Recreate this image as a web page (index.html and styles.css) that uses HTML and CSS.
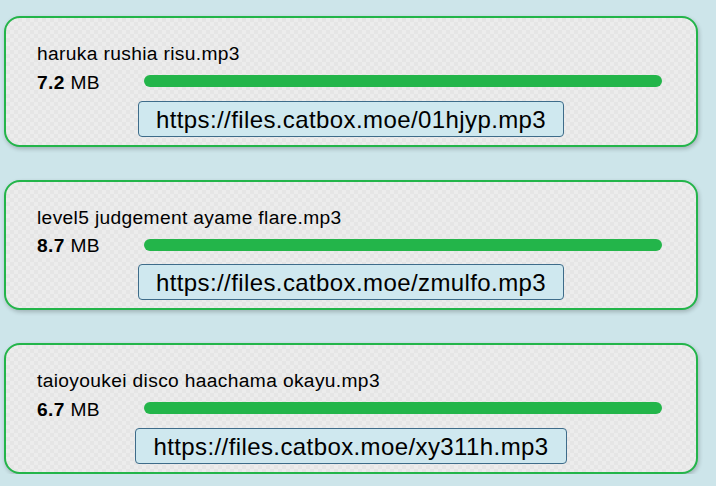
FILE: index.html
```html
<!DOCTYPE html>
<html lang="en">
<head>
<meta charset="utf-8">
<title>Uploads</title>
<link rel="stylesheet" href="styles.css">
</head>
<body>
<main class="list">
  <section class="card">
    <div class="name">haruka rushia risu.mp3</div>
    <div class="row">
      <span class="size"><b>7.2</b> MB</span>
      <span class="bar"></span>
    </div>
    <div class="linkwrap"><span class="link">https://files.catbox.moe/01hjyp.mp3</span></div>
  </section>
  <section class="card">
    <div class="name">level5 judgement ayame flare.mp3</div>
    <div class="row">
      <span class="size"><b>8.7</b> MB</span>
      <span class="bar"></span>
    </div>
    <div class="linkwrap"><span class="link">https://files.catbox.moe/zmulfo.mp3</span></div>
  </section>
  <section class="card">
    <div class="name">taioyoukei disco haachama okayu.mp3</div>
    <div class="row">
      <span class="size"><b>6.7</b> MB</span>
      <span class="bar"></span>
    </div>
    <div class="linkwrap"><span class="link">https://files.catbox.moe/xy311h.mp3</span></div>
  </section>
</main>
</body>
</html>
```

FILE: styles.css
```css
html, body {
  margin: 0;
  padding: 0;
  background: #cde5ea;
  font-family: "Liberation Sans", Arial, sans-serif;
  color: #000;
}

.list {
  display: flex;
  flex-direction: column;
  gap: 33px;
  padding: 16px 18px 0 4px;
}

.card {
  border: 2px solid #23b54a;
  border-radius: 16px;
  padding: 25px 31px 8px 31px;
  background-color: #e9e9e9;
  background-image: conic-gradient(#e5e5e5 25%, #ececec 0 50%, #e5e5e5 0 75%, #ececec 0);
  background-size: 8px 8px;
  box-shadow: 1px 2px 4px rgba(0, 0, 0, 0.22);
}

.name {
  font-size: 19.2px;
  line-height: 22px;
  letter-spacing: 0.35px;
}

.row {
  display: flex;
  align-items: center;
  margin-top: 6.5px;
  height: 22px;
}

.size {
  width: 107px;
  flex: none;
  font-size: 19.2px;
  line-height: 22px;
  letter-spacing: 0.35px;
}

.bar {
  flex: 1;
  height: 12px;
  border-radius: 6px;
  background: #23b54a;
  margin-right: 3px;
  margin-bottom: 3px;
}

.linkwrap {
  display: flex;
  justify-content: center;
  margin-top: 7px;
}

.link {
  display: inline-block;
  font-size: 24px;
  line-height: 28px;
  letter-spacing: 0.4px;
  padding: 4px 17px 2px 17px;
  border: 1px solid #3e6c8a;
  border-radius: 4px;
  background: #cfe8ef;
}
```
